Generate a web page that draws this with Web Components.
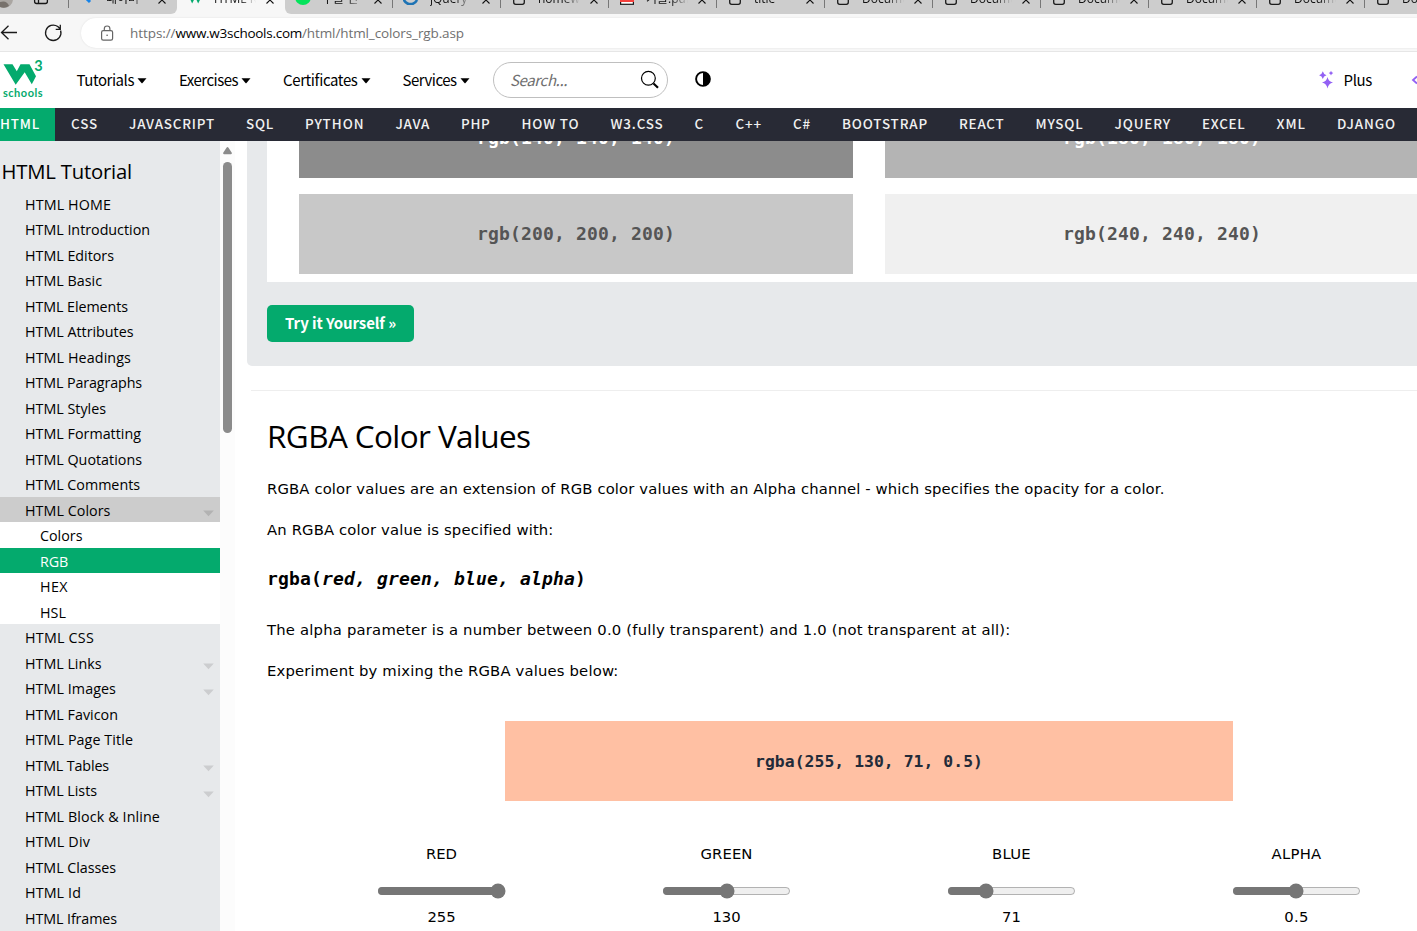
<!DOCTYPE html>
<html lang="en">
<head>
<meta charset="utf-8">
<title>HTML RGB and RGBA Colors</title>
<style>
html,body{margin:0;padding:0;height:100%;overflow:hidden;background:#fff;color:#000}
body{display:flex;flex-direction:column;font-family:"Open Sans",sans-serif}
</style>
</head>
<body>
<browser-tabs></browser-tabs>
<address-bar></address-bar>
<top-nav></top-nav>
<topic-nav></topic-nav>
<page-body>
  <side-menu slot="side"></side-menu>
  <example-panel></example-panel>
  <rgba-article></rgba-article>
</page-body>

<script>
const define = (name, html) => customElements.define(name, class extends HTMLElement {
  connectedCallback() {
    if (this.shadowRoot) return;
    this.attachShadow({ mode: 'open' }).innerHTML = typeof html === 'function' ? html(this) : html;
  }
});

/* Tab strip */
const page = '<svg width="12" height="14" viewBox="0 0 12 14"><path d="M.7 0V11.3a2 2 0 0 0 2 2H9.3a2 2 0 0 0 2-2V0" fill="none" stroke="#1b1b1b" stroke-width="1.3"/></svg>';
const tabs = [
  ['<svg width="12" height="14" viewBox="0 0 12 14"><path d="M4 6l5 5" stroke="#1683e8" stroke-width="3"/></svg>', '네이버', 'first'],
  ['<svg width="12" height="14" viewBox="0 0 12 14"><path d="M1 5l2.200 5 2-4M7 5l2.200 5 1.500-3" fill="none" stroke="#04aa6d" stroke-width="2.200"/></svg>', 'HTML R', 'on'],
  ['<svg width="16" height="16" viewBox="0 0 16 16"><circle cx="8" cy="8" r="8" fill="#04e35b"/></svg>', '구글 번', 'after'],
  ['<svg width="16" height="16" viewBox="0 0 16 16"><path d="M1 5a7 7 0 0 0 13 6M5 5a4 4 0 0 0 7 3" fill="none" stroke="#1d73b4" stroke-width="2.6"/></svg>', 'jQuery', ''],
  [page, 'homewo', ''],
  ['<svg width="14" height="14" viewBox="0 0 14 14"><rect x=".6" y="1" width="12.8" height="12.3" fill="#fff" stroke="#1b1b1b" stroke-width="1.2"/><rect y="4" width="14" height="7" fill="#f4403c"/></svg>', '기출.pdf', ''],
  [page, 'title', ''],
  [page, 'Docume', ''],[page, 'Docume', ''],[page, 'Docume', ''],[page, 'Docume', ''],[page, 'Docume', ''],[page, 'Docume', '']
];
define('browser-tab', el => `<style>
:host{display:block;flex:none;width:108px;height:14px;box-sizing:border-box;background:#cdcdcd;overflow:hidden}
.r{display:flex;align-items:flex-end;height:14px;box-sizing:border-box;font:12px/16px "Open Sans","Noto Sans CJK KR",sans-serif;color:#111;position:relative}
.i{width:16px;display:flex;justify-content:center;margin:0 0 9px 10px}
.i ::slotted(svg){display:block}
.t{margin:0 0 7px 11px;width:42px;overflow:hidden;white-space:nowrap;-webkit-mask:linear-gradient(90deg,#000 60%,transparent)}
.x{margin:0 0 10px 10px;display:block}
.s{width:1px;height:8px;background:#777;position:absolute;right:0;top:0}
:host(.first) .s,:host(.on) .s{display:none}
:host(.on){background:#f7f7f7}
:host(.first){border-radius:0 0 6px 0}:host(.after){border-radius:0 0 0 6px}
</style><div class="r"><span class="i"><slot name="icon"></slot></span><span class="t"><slot></slot></span>
<svg class="x" width="8" height="8" viewBox="0 0 8 8"><path d="M.5 .5l7 7M7.5 .5l-7 7" stroke="#111" stroke-width="1.1"/></svg><i class="s"></i></div>`);
define('browser-tabs', `<style>
:host{display:flex;flex:none;height:14px;overflow:hidden;background:linear-gradient(90deg,#cdcdcd 160px,#f7f7f7 160px,#f7f7f7 300px,#cdcdcd 300px)}
.lead{width:69px;flex:none;box-sizing:border-box;display:flex;border-right:1px solid #777;height:8px;overflow:visible}
svg{display:block;flex:none}
</style><div class="lead"><svg width="68" height="14" viewBox="0 0 68 14"><circle cx="4" cy="-1" r="9" fill="#aaa6a2"/><path d="M0 7V2Q7 0 9 6Q5 9 0 7" fill="#77716b"/><path d="M34.600 0v1.500a2 2 0 0 0 2 2h8.800a2 2 0 0 0 2-2V0M38.500 0v3.500" fill="none" stroke="#161616" stroke-width="1.300"/></svg></div>
${tabs.map(t => `<browser-tab class="${t[2]}">${t[0].replace('<svg', '<svg slot="icon"')}${t[1]}</browser-tab>`).join('')}`);

/* Address bar */
define('address-bar', `<style>
:host{display:flex;flex:none;height:38px;box-sizing:border-box;border-bottom:1px solid #e6e6e6;background:#f7f7f7;align-items:flex-start}
.b{flex:none;width:81px;height:38px;display:block}
.pill{flex:1;display:flex;align-items:center;height:30px;margin-top:4px;background:#fff;border-radius:15px 0 0 15px;box-shadow:0 0 2px #ddd;font-size:13.5px;color:#707070}
.pill svg{margin:0 15px 0 19px}
b{font-weight:400;color:#000}
</style>
<svg class="b" viewBox="0 14 81 38" fill="none" stroke="#1b1b1b" stroke-width="1.3"><path d="M17 32.500H1.500M8.500 25.800L1.500 32.500l7 6.700"/><path d="M60.600 30.500A7.700 7.700 0 1 1 57.800 26.600L60 28.800M60.300 24.700v4.600h-4.600"/></svg>
<div class="pill"><svg width="15" height="17" viewBox="0 0 15 17" fill="none" stroke="#666" stroke-width="1.200"><rect x="1.600" y="5.600" width="11" height="9.500" rx="1.700"/><path d="M4.300 5.500V3.800a2.800 2.800 0 0 1 5.600 0v1.700"/><circle cx="7.100" cy="10.300" r=".8" fill="#555" stroke="none"/></svg><fit-text w="45.500">https://</fit-text><b><fit-text w="126.500">www.w3schools.com</fit-text></b><fit-text w="162">/html/html_colors_rgb.asp</fit-text></div>`);

/* Site header */
const SRC = '"Noto Sans CJK KR","Noto Sans",sans-serif';
define('nav-item', el => `<style>:host{display:flex;align-items:center;flex:none;gap:3px}svg{display:block;margin-top:1px}</style>
<fit-text w="${el.getAttribute('w')}"><slot></slot></fit-text><svg width="10" height="6" viewBox="0 0 10 6"><path d="M.5 .3h9L5.300 5.200q-.3.3-.6 0z"/></svg>`);
define('search-field', `<style>:host{display:flex;flex:none;box-sizing:border-box;width:175px;height:36px;border:1px solid #bfbfbf;border-radius:18px;align-items:center;justify-content:space-between;padding:0 7px 0 16px;color:#707070;font-style:italic}</style>
<fit-text w="57">Search...</fit-text><svg width="20" height="20" viewBox="0 0 20 20" fill="none" stroke="#000"><circle cx="8.400" cy="8.300" r="6.900" stroke-width="1.200"/><path d="M13.500 13.500l4.500 4.200" stroke-width="2.200"/></svg>`);
define('top-nav', `<style>
:host{display:flex;flex:none;height:56px;align-items:center;background:#fff;font:15px/24px ${SRC};overflow:hidden}
.logo{width:76.500px;flex:none;height:56px;display:block}
.logo text{font-family:Lato,sans-serif;font-weight:700;fill:#04aa6d}
nav-item+nav-item{margin-left:32px}
search-field{margin-left:23.500px}
.half{margin:-3px auto 0 27px;display:block}
.spark{margin-right:8px;display:block}
.more{margin-left:39px;flex:none;width:6px}
</style>
<svg class="logo" viewBox="0 0 76.500 56"><path d="M3.500 12.200H12.500L16.800 19.200 20.500 12.200H29.500L36 24.300 31.800 32.300 24.700 20.300 15.700 32.800z" fill="#04aa6d"/><text x="34.300" y="19.300" font-size="14.500" textLength="8.500">3</text><text x="3" y="44.800" font-size="11" textLength="39.500">schools</text></svg>
<nav-item w="57.500">Tutorials</nav-item><nav-item w="59">Exercises</nav-item><nav-item w="74.500">Certificates</nav-item><nav-item w="54">Services</nav-item>
<search-field></search-field>
<svg class="half" width="16" height="16" viewBox="0 0 16 16"><circle cx="8" cy="8" r="6.900" fill="#fff" stroke="#000" stroke-width="1.900"/><path d="M8 1a7 7 0 0 1 0 14z"/></svg>
<svg class="spark" width="17" height="20" viewBox="0 0 17 20" fill="#9361f4"><path d="M8.500 7q.9 4.500 5.500 5.500-4.600 1-5.500 6-.9-5-5.500-6 4.600-1 5.500-5.500zM3.800 1.300q.7 3 3.700 3.900-3 .8-3.700 3.800-.7-3-3.700-3.800 3-.9 3.700-3.900zM12 .7q.4 2 2.300 2.400-1.900.5-2.300 2.500-.4-2-2.300-2.500 1.900-.4 2.300-2.400z"/></svg>
<fit-text w="28.500">Plus</fit-text>
<svg class="more" width="6" height="10" viewBox="0 0 6 10"><path d="M6 1.500L2 5l4 3.500" fill="none" stroke="#9361f4" stroke-width="1.800"/></svg>`);

/* Topic bar: label and the x where its text begins */
const topics = [['HTML',0],['CSS',71],['JAVASCRIPT',129],['SQL',246],['PYTHON',305],['JAVA',395.5],['PHP',461],['HOW TO',521.500],['W3.CSS',610.500],['C',694.500],['C++',735.500],['C#',793],['BOOTSTRAP',842],['REACT',959],['MYSQL',1035.500],['JQUERY',1114.500],['EXCEL',1202],['XML',1276.500],['DJANGO',1337],['',1427]];
define('topic-nav', `<style>
:host{display:flex;flex:none;height:33px;background:#282a35;color:#f1f1f1;font:500 13.400px/30px ${SRC};overflow:hidden;position:relative;z-index:2}
span{flex:none;padding:0 15px 0 16px;height:33px;white-space:nowrap}
span.on{background:#04aa6d;padding-left:0;color:#fff}
</style>${topics.slice(0, -1).map((t, i) => `<span${i ? '' : ' class="on"'}><fit-text w="${topics[i + 1][1] - t[1] - 31}">${t[0]}</fit-text></span>`).join('')}`);

/* Body grid */
define('page-body', `<style>
:host{display:flex;flex:1;min-height:0;overflow:hidden}
main{flex:1;min-width:0;padding-left:12px;overflow:hidden}
.sb{width:15px;flex:none;background:#fcfcfc}
svg{display:block}
</style><slot name="side"></slot><div class="sb"><svg width="15" height="300" viewBox="0 0 15 300" fill="#8b8b8b"><path d="M7.500 6Q8 6 8.500 6.800L11.800 11.800Q12.200 13.200 11 13.200H4Q2.800 13.200 3.200 11.800L6.500 6.800Q7 6 7.500 6z"/><rect x="3" y="21" width="9" height="271" rx="4.500"/></svg></div><main><slot></slot></main>`);

define('side-link', el => `<style>
:host{display:flex;flex:none;box-sizing:border-box;width:220px;height:25.500px;padding:0 6.500px 0 25px;align-items:center;justify-content:space-between;line-height:25.500px}
:host(.open){background:#ccc}:host(.sub){background:#fff;padding-left:40px}:host(.cur){background:#04aa6d;color:#fff}
svg{display:block;margin-top:8px}
fit-text{margin-top:1.700px}
</style><fit-text w="${el.getAttribute('w')}"><slot></slot></fit-text>${el.hasAttribute('more') ? '<svg width="11" height="7" viewBox="0 0 11 7"><path d="M.2.500h10.600L5.500 6.300z" fill="' + (el.className === 'open' ? '#b2b2b2' : '#cccdcf') + '"/></svg>' : ''}`);
const links = [['HTML HOME',86],['HTML Introduction',125],['HTML Editors',89],['HTML Basic',77],['HTML Elements',103],['HTML Attributes',108.500],['HTML Headings',106],['HTML Paragraphs',117],['HTML Styles',81],['HTML Formatting',116],['HTML Quotations',117],['HTML Comments',115],['HTML Colors',85.500,'open',1],['Colors',42.500,'sub'],['RGB',28,'sub cur'],['HEX',28,'sub'],['HSL',26,'sub'],['HTML CSS',69],['HTML Links',76.500,'',1],['HTML Images',91,'',1],['HTML Favicon',93],['HTML Page Title',108],['HTML Tables',84,'',1],['HTML Lists',72,'',1],['HTML Block &amp; Inline',135],['HTML Div',65],['HTML Classes',91],['HTML Id',56],['HTML Iframes',92]];
define('side-menu', `<style>
:host{display:block;flex:none;width:220px;background:#e7e9eb;font:14.300px "Open Sans",sans-serif;overflow:hidden}
h2{margin:0;height:49.900px;padding:16px 0 0 1.500px;box-sizing:border-box;font-size:20.300px;line-height:29px;font-weight:400}
</style><h2><fit-text w="130.500">HTML Tutorial</fit-text></h2>${links.map(l => `<side-link w="${l[1]}" class="${l[2] || ''}"${l[3] ? ' more' : ''}>${l[0]}</side-link>`).join('')}`);

/* Grey swatches */
define('color-tile', el => `<style>:host{display:flex;height:80px;align-items:center;justify-content:center;background:var(--tile);color:var(--ink);font:bold 18px/24px "DejaVu Sans Mono",monospace}</style><fit-text w="${el.getAttribute('w')}"><slot></slot></fit-text>`);
define('example-panel', `<style>
:host{display:block;height:225px;width:1250px;background:#e7e9eb;border-radius:0 0 5px 5px;overflow:hidden}
.g{margin-left:20px;background:#fff;height:141px;box-sizing:border-box;padding:0 32px 8px;display:grid;grid-template-columns:554px 554px;gap:16px 32px;align-content:end;overflow:hidden}
button{display:block;margin:23px 0 0 20px;width:147px;height:37px;border:0;border-radius:5px;background:#04aa6d;color:#fff;font:bold 15px/34px ${SRC};padding:0 0 2px}
</style><div class="g">
<color-tile w="198" style="--tile:rgb(140,140,140);--ink:#fff">rgb(140, 140, 140)</color-tile><color-tile w="198" style="--tile:rgb(180,180,180);--ink:#fff">rgb(180, 180, 180)</color-tile>
<color-tile w="198" style="--tile:rgb(200,200,200);--ink:#555">rgb(200, 200, 200)</color-tile><color-tile w="198" style="--tile:rgb(240,240,240);--ink:#555">rgb(240, 240, 240)</color-tile></div>
<button><fit-text w="111">Try it Yourself »</fit-text></button>`);

define('range-field', el => `<style>
:host{display:flex;flex-direction:column;align-items:center;width:285px;flex:none;line-height:24px}
input{width:129px;height:16px;margin:17px 1px 6px 0;accent-color:#767676}
</style><fit-text w="${el.getAttribute('lw')}">${el.getAttribute('label')}</fit-text><input type="range" min="0" max="${el.getAttribute('max')}" step="any" value="${el.getAttribute('value')}"><fit-text w="${el.getAttribute('vw')}">${el.getAttribute('value')}</fit-text>`);
define('rgba-article', `<style>
:host{display:block;font:14.800px/24px "DejaVu Sans",sans-serif;padding-left:4px}
hr{margin:24px 0 0;border:0;height:1px;background:#eee}
section{padding-left:16px}
h2{margin:21px 0 17px;font:400 31.500px/48px "Open Sans",sans-serif}
p{margin:0 0 17px;height:24px;white-space:nowrap}
.code{margin:25px 0 27px;font:bold 18px/24px "DejaVu Sans Mono",monospace}
.box{margin:38px 0 41px 238px;width:728px;background:rgba(255,130,71,.5);--ink:#222b39}
.box color-tile{--tile:transparent;font-size:16.400px;box-sizing:border-box;padding-top:2px}
.row{display:flex;padding-left:32px}
</style><hr><section>
<h2><fit-text w="263.500">RGBA Color Values</fit-text></h2>
<p><fit-text w="897.500">RGBA color values are an extension of RGB color values with an Alpha channel - which specifies the opacity for a color.</fit-text></p>
<p><fit-text w="286.500">An RGBA color value is specified with:</fit-text></p>
<p class="code"><fit-text w="319">rgba(<i>red, green, blue, alpha</i>)</fit-text></p>
<p><fit-text w="743.500">The alpha parameter is a number between 0.0 (fully transparent) and 1.0 (not transparent at all):</fit-text></p>
<p><fit-text w="351.500">Experiment by mixing the RGBA values below:</fit-text></p>
<div class="box"><color-tile w="228">rgba(255, 130, 71, 0.5)</color-tile></div>
<div class="row"><range-field label="RED" lw="31" vw="28" max="255" value="255"></range-field><range-field label="GREEN" lw="52" vw="28" max="255" value="130"></range-field><range-field label="BLUE" lw="39" vw="19" max="255" value="71"></range-field><range-field label="ALPHA" lw="50" vw="24.500" max="1" value="0.5"></range-field></div>
</section>`);

/* A run of text set to a given measure by tracking */
customElements.define('fit-text', class extends HTMLElement {
  connectedCallback() {
    if (this.shadowRoot) return;
    const root = this.attachShadow({ mode: 'open' });
    root.innerHTML = '<style>:host{display:inline-block;white-space:pre;vertical-align:top;flex:none}span{white-space:pre}</style><span><slot></slot></span>';
    const w = parseFloat(this.getAttribute('w'));
    const host = this.getRootNode().host;
    const text = this.textContent.trim() || (host ? host.textContent.trim() : '');
    const natural = root.querySelector('span').getBoundingClientRect().width;
    if (w && natural && text.length) {
      this.style.letterSpacing = ((w - natural) / text.length) + 'px';
      this.style.width = w + 'px';
    }
  }
});
</script>
</body>
</html>
